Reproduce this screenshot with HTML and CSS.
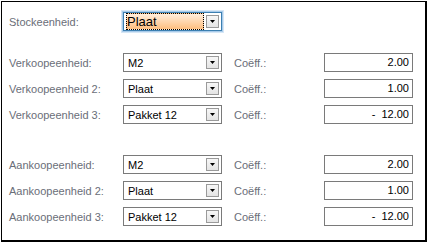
FILE: index.html
```html
<!DOCTYPE html>
<html>
<head>
<meta charset="utf-8">
<link rel="stylesheet" href="styles.css">
</head>
<body>
<div class="frame">
  <div class="row stock">
    <div class="label">Stockeenheid:</div>
    <div class="combo focus">
      <div class="field"><span class="ftext">Plaat</span></div>
      <div class="btn"><svg width="5" height="3" viewBox="0 0 5 3"><polygon points="0,0 5,0 2.5,3" fill="#000"/></svg></div>
    </div>
  </div>

  <div class="group verkoop">
    <div class="row">
      <div class="label">Verkoopeenheid:</div>
      <div class="combo"><div class="field">M2</div><div class="btn"><svg width="5" height="3" viewBox="0 0 5 3"><polygon points="0,0 5,0 2.5,3" fill="#000"/></svg></div></div>
      <div class="clabel">Coëff.:</div>
      <div class="num">2.00</div>
    </div>
    <div class="row">
      <div class="label">Verkoopeenheid 2:</div>
      <div class="combo"><div class="field">Plaat</div><div class="btn"><svg width="5" height="3" viewBox="0 0 5 3"><polygon points="0,0 5,0 2.5,3" fill="#000"/></svg></div></div>
      <div class="clabel">Coëff.:</div>
      <div class="num">1.00</div>
    </div>
    <div class="row">
      <div class="label">Verkoopeenheid 3:</div>
      <div class="combo"><div class="field">Pakket 12</div><div class="btn"><svg width="5" height="3" viewBox="0 0 5 3"><polygon points="0,0 5,0 2.5,3" fill="#000"/></svg></div></div>
      <div class="clabel">Coëff.:</div>
      <div class="num">-&nbsp;&nbsp;12.00</div>
    </div>
  </div>

  <div class="group aankoop">
    <div class="row">
      <div class="label">Aankoopeenheid:</div>
      <div class="combo"><div class="field">M2</div><div class="btn"><svg width="5" height="3" viewBox="0 0 5 3"><polygon points="0,0 5,0 2.5,3" fill="#000"/></svg></div></div>
      <div class="clabel">Coëff.:</div>
      <div class="num">2.00</div>
    </div>
    <div class="row">
      <div class="label">Aankoopeenheid 2:</div>
      <div class="combo"><div class="field">Plaat</div><div class="btn"><svg width="5" height="3" viewBox="0 0 5 3"><polygon points="0,0 5,0 2.5,3" fill="#000"/></svg></div></div>
      <div class="clabel">Coëff.:</div>
      <div class="num">1.00</div>
    </div>
    <div class="row">
      <div class="label">Aankoopeenheid 3:</div>
      <div class="combo"><div class="field">Pakket 12</div><div class="btn"><svg width="5" height="3" viewBox="0 0 5 3"><polygon points="0,0 5,0 2.5,3" fill="#000"/></svg></div></div>
      <div class="clabel">Coëff.:</div>
      <div class="num">-&nbsp;&nbsp;12.00</div>
    </div>
  </div>
</div>
</body>
</html>
```

FILE: styles.css
```css
html, body {
  margin: 0;
  padding: 0;
  background: #fff;
}
body {
  font-family: "Liberation Sans", Arial, sans-serif;
  font-size: 11px;
}
.frame {
  margin: 1px 0 0 1px;
  width: 426px;
  height: 241px;
  border: 1px solid #000;
  border-right-width: 2px;
  border-bottom-width: 2px;
  padding: 10px 0 0 7px;
  box-sizing: border-box;
  display: flex;
  flex-direction: column;
}
.group {
  display: flex;
  flex-direction: column;
  gap: 7px;
}
.verkoop { margin-top: 22px; }
.aankoop { margin-top: 31px; }
.row {
  display: flex;
  align-items: center;
  height: 19px;
}
.label {
  width: 114px;
  color: #6a6e78;
}
.combo {
  width: 99px;
  height: 19px;
  box-sizing: border-box;
  border: 1px solid #7a7a7a;
  display: flex;
  align-items: center;
  padding: 0 2px 0 3px;
  background: #fff;
}
.field {
  flex: 1;
  color: #000;
  padding-left: 1px;
}
.btn {
  width: 13px;
  height: 13px;
  box-sizing: border-box;
  border: 1px solid #9a9a9a;
  background: linear-gradient(#f7f7f7, #e4e4e4);
  display: flex;
  align-items: center;
  justify-content: center;
}
.focus {
  border-color: #3c7fb1;
  box-shadow: 0 0 0 1px #a8cbea, 0 0 0 2px #d6e6f5;
  padding: 1px 2px 1px 2px;
  font-size: 13px;
}
.focus .field {
  height: 15px;
  margin-right: 2px;
  padding-left: 0;
  background: linear-gradient(#ffeedd, #ffbf80);
  border: 1px dotted #000;
  display: flex;
  align-items: center;
  line-height: 13px;
}
.clabel {
  width: 90px;
  margin-left: 12px;
  color: #6a6e78;
}
.num {
  width: 89px;
  height: 19px;
  box-sizing: border-box;
  border: 1px solid #7a7a7a;
  text-align: right;
  padding-right: 3px;
  line-height: 17px;
  color: #000;
  white-space: pre;
}
```
